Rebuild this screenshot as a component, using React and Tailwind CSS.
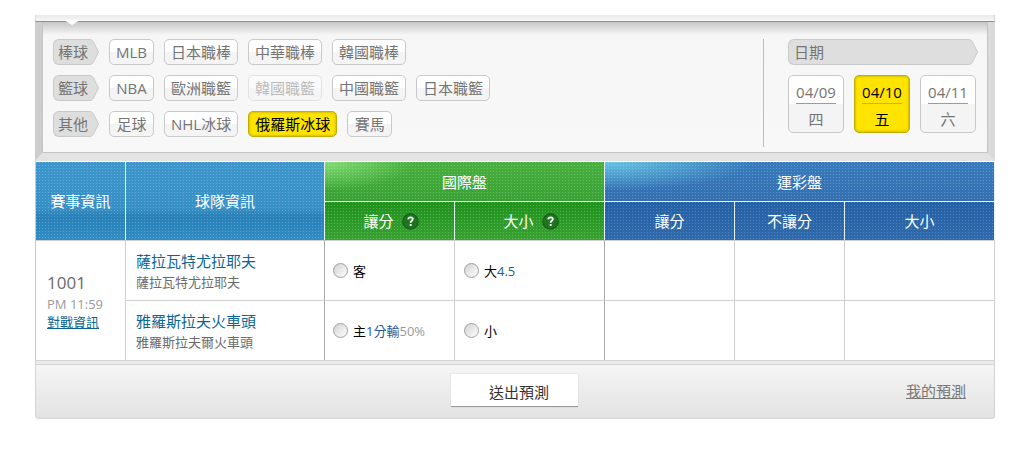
import React, { useState } from 'react';
import clsx from 'clsx';

const groups = [
  {
    label: '棒球',
    leagues: [
      { name: 'MLB' },
      { name: '日本職棒' },
      { name: '中華職棒' },
      { name: '韓國職棒' },
    ],
  },
  {
    label: '籃球',
    leagues: [
      { name: 'NBA' },
      { name: '歐洲職籃' },
      { name: '韓國職籃', disabled: true },
      { name: '中國職籃' },
      { name: '日本職籃' },
    ],
  },
  {
    label: '其他',
    leagues: [
      { name: '足球' },
      { name: 'NHL冰球' },
      { name: '俄羅斯冰球' },
      { name: '賽馬' },
    ],
  },
];

const dates = [
  { date: '04/09', day: '四' },
  { date: '04/10', day: '五' },
  { date: '04/11', day: '六' },
];

const rows = [
  {
    team: '薩拉瓦特尤拉耶夫',
    full: '薩拉瓦特尤拉耶夫',
    spread: { pick: '客' },
    total: { pick: '大', line: '4.5' },
  },
  {
    team: '雅羅斯拉夫火車頭',
    full: '雅羅斯拉夫爾火車頭',
    spread: { pick: '主', line: '1分輸', odds: '50%' },
    total: { pick: '小' },
  },
];

const plain = 'border-[#c9c9c9] bg-linear-to-b from-white from-50% to-[#f4f4f4] to-50% text-[#757575]';
const active = 'border-[#c2ae00] bg-[#ffe400] text-black shadow-[inset_0_0_2px_1px_#d8c000]';

const Tag = ({ children, wide }) => (
  <div className={clsx('flex h-[26px]', wide ? 'w-full' : 'w-[46px]')}>
    <div
      className={clsx(
        'flex flex-1 items-center whitespace-nowrap rounded-l-md border border-r-0 border-[#c9c9c9] bg-[#dedede] text-[#757575]',
        wide ? 'pl-[5px]' : 'pl-1'
      )}
    >
      {children}
    </div>
    <svg width="10" height="26" viewBox="0 0 10 26" className="shrink-0">
      <path d="M0 .5H1Q3 .5 4.500 3L9.500 13L4.500 23Q3 25.500 1 25.500H0" fill="#dedede" stroke="#c9c9c9" />
    </svg>
  </div>
);

const League = ({ league, selected, onSelect }) => (
  <button
    type="button"
    disabled={league.disabled}
    onClick={() => onSelect(league.name)}
    className={clsx(
      'flex h-[26px] min-w-[45px] items-center justify-center whitespace-nowrap rounded-[5px] border px-[6px]',
      selected ? active : plain,
      league.disabled && 'opacity-45'
    )}
  >
    {league.name}
  </button>
);

const Help = () => (
  <button type="button" aria-label="說明" className="ml-2">
    <svg width="17" height="17" viewBox="0 0 17 17">
      <circle cx="8.500" cy="8.500" r="7.700" fill="#1f7420" stroke="#17601a" strokeWidth="1.200" />
      <path d="M6.200 6.400Q6.400 4.300 8.600 4.300Q10.800 4.300 10.800 6.100Q10.800 7.300 9.600 8Q8.600 8.600 8.600 9.800" fill="none" stroke="#fff" strokeWidth="1.800" />
      <rect x="7.700" y="11" width="1.900" height="1.900" fill="#fff" />
    </svg>
  </button>
);

const Pick = ({ name, option }) => (
  <label className="flex items-center text-[13px] text-black">
    <input
      type="radio"
      name={name}
      value={option.pick}
      className="mr-[5px] size-[15px] appearance-none rounded-full border border-[#9f9f9f] bg-linear-to-br from-[#d2d2d2] to-white checked:border-4 checked:border-[#1b5a9c]"
    />
    <span>{option.pick}</span>
    {option.line && <span className="text-[#1b5a9c]">{option.line}</span>}
    {option.odds && <span className="text-[#999]">{option.odds}</span>}
  </label>
);

// header cells: dot grid, corner glow, base gradient
const head = 'border-r border-[#e4f2f8] p-0 font-normal text-white bg-size-[3px_3px,100%_100%,100%_100%]';
const cyan = 'bg-[conic-gradient(at_1px_1px,transparent_75%,#ffffff38_0),linear-gradient(transparent,transparent),linear-gradient(#3d97cc,#3790c5_60%,#2880b7_70%,#318dc3)]';
const green = 'bg-[conic-gradient(at_1px_1px,transparent_75%,#ffffff38_0),radial-gradient(90px_28px_at_0_0,#82dc74,transparent),linear-gradient(#47b03f,#3aa235)]';
const darkGreen = 'bg-[conic-gradient(at_1px_1px,transparent_75%,#ffffff38_0),linear-gradient(transparent,transparent),linear-gradient(#1f921c,#38a232)]';
const blue = 'bg-[conic-gradient(at_1px_1px,transparent_75%,#ffffff38_0),radial-gradient(150px_28px_at_0_0,#66c4e2,transparent),linear-gradient(#377bbd,#356fb0)]';
const darkBlue = 'bg-[conic-gradient(at_1px_1px,transparent_75%,#ffffff30_0),linear-gradient(transparent,transparent),linear-gradient(#2461a4,#2f6aad)]';

const App = () => {
  const [league, setLeague] = useState('俄羅斯冰球');
  const [date, setDate] = useState('04/10');

  return (
    <main className="bg-white pt-[15px] pr-9 pb-10 pl-[35px] font-['Open_Sans','Noto_Sans_CJK_TC',sans-serif] text-[15px] leading-5 text-[#6b6b6b]">
      {/* Filters */}
      <div className="relative h-[7px] border-x border-b border-x-[#d5d5d5] border-b-[#8f8f8f] bg-linear-to-b from-[#e9e9e9] to-[#f8f8f8]">
        <svg width="16" height="6" viewBox="0 0 16 6" className="absolute top-[5px] left-7">
          <path d="M0 0H16L8 5Z" fill="#fff" />
        </svg>
      </div>
      <section className="border-x-[7px] border-b-8 border-l-[#cdcdcd] border-r-[#dadada] border-b-[#e3e3e3]">
        <div className="flex justify-between border border-t-0 border-[#c4c4c4] bg-linear-to-b from-[#c6c6c6] via-[#f6f6f6] via-10% to-[#f8f8f8] pt-[17px] pr-[9px] pb-[5px] pl-[10px]">
          <div className="flex flex-col gap-[10px]">
            {groups.map((group) => (
              <div key={group.label} className="flex gap-[10px]">
                <Tag>{group.label}</Tag>
                {group.leagues.map((item) => (
                  <League
                    key={item.name}
                    league={item}
                    selected={item.name === league}
                    onSelect={setLeague}
                  />
                ))}
              </div>
            ))}
          </div>
          <div className="h-[108px] w-[215px] border-l border-[#bdbdbd] pl-6">
            <Tag wide>日期</Tag>
            <div className="mt-[10px] flex gap-[10px]">
              {dates.map((item) => (
                <button
                  key={item.date}
                  type="button"
                  onClick={() => setDate(item.date)}
                  className={clsx(
                    'flex h-[58px] w-14 flex-col items-center rounded-[5px] border pt-[6px]',
                    item.date === date ? active : plain
                  )}
                >
                  <span
                    className={clsx(
                      'h-[22px] border-b',
                      item.date === date ? 'border-[#e0ad00]' : 'border-[#9c9c9c]'
                    )}
                  >
                    {item.date}
                  </span>
                  <span className="mt-[5px]">{item.day}</span>
                </button>
              ))}
            </div>
          </div>
        </div>
      </section>

      {/* Odds */}
      <div className="border-l border-[#c9c9c9] pt-px">
        <table className="w-full table-fixed border-separate border-spacing-0 text-center">
          <colgroup>
            <col className="w-[90px]" />
            <col className="w-[199px]" />
            <col className="w-[130px]" />
            <col className="w-[150px]" />
            <col className="w-[130px]" />
            <col className="w-[110px]" />
            <col className="w-[150px]" />
          </colgroup>
          <thead>
            <tr className="h-10">
              <th rowSpan={2} className={clsx(head, cyan)}>賽事資訊</th>
              <th rowSpan={2} className={clsx(head, cyan)}>球隊資訊</th>
              <th colSpan={2} className={clsx(head, green, 'border-b')}>國際盤</th>
              <th colSpan={3} className={clsx(head, blue, 'border-b')}>運彩盤</th>
            </tr>
            <tr className="h-[38px]">
              <th className={clsx(head, darkGreen)}>
                <div className="flex items-center justify-center pl-[3px]">讓分<Help /></div>
              </th>
              <th className={clsx(head, darkGreen)}>
                <div className="flex items-center justify-center pl-[3px]">大小<Help /></div>
              </th>
              <th className={clsx(head, darkBlue)}>讓分</th>
              <th className={clsx(head, darkBlue)}>不讓分</th>
              <th className={clsx(head, darkBlue)}>大小</th>
            </tr>
          </thead>
          <tbody>
            {rows.map((row, i) => (
              <tr key={row.team} className="h-[60px] *:border-t *:border-r *:border-[#cfcfcf] *:p-0">
                {i === 0 && (
                  <td rowSpan={2} className="text-left">
                    <div className="pl-[11px]">
                      <div className="text-[17px] leading-[22px]">1001</div>
                      <div className="text-[13px] text-[#9a9a9a]">PM 11:59</div>
                      <a href="#match" className="block text-[13px] leading-4 text-[#0b6693] underline">對戰資訊</a>
                    </div>
                  </td>
                )}
                <td className="border-r-[#a8a8a8]! text-left">
                  <div className="pl-[10px]">
                    <div className="leading-[22px] text-[#0b6693]">{row.team}</div>
                    <div className="text-[13px]">{row.full}</div>
                  </div>
                </td>
                <td><div className="pl-2"><Pick name="spread" option={row.spread} /></div></td>
                <td className="border-r-[#a8a8a8]!"><div className="pl-[9px]"><Pick name="total" option={row.total} /></div></td>
                <td />
                <td />
                <td />
              </tr>
            ))}
          </tbody>
        </table>
      </div>

      {/* Footer */}
      <div className="h-[5px] border border-[#d3d3d3] bg-[#ebebeb]" />
      <footer className="grid grid-cols-3 items-center rounded-b-sm border border-t-0 border-[#d3d3d3] bg-linear-to-b from-[#f5f5f5] to-[#e3e3e3] pt-[9px] pb-[11px]">
        <button
          type="submit"
          className="col-start-2 h-[33px] w-[127px] justify-self-center border-b border-[#999] bg-white pt-1 pl-2 text-[#333] shadow-[0_0_1px_#bbb]"
        >
          送出預測
        </button>
        <a href="#mine" className="justify-self-end pr-7 text-[#777] underline">我的預測</a>
      </footer>
    </main>
  );
};

export default App;
